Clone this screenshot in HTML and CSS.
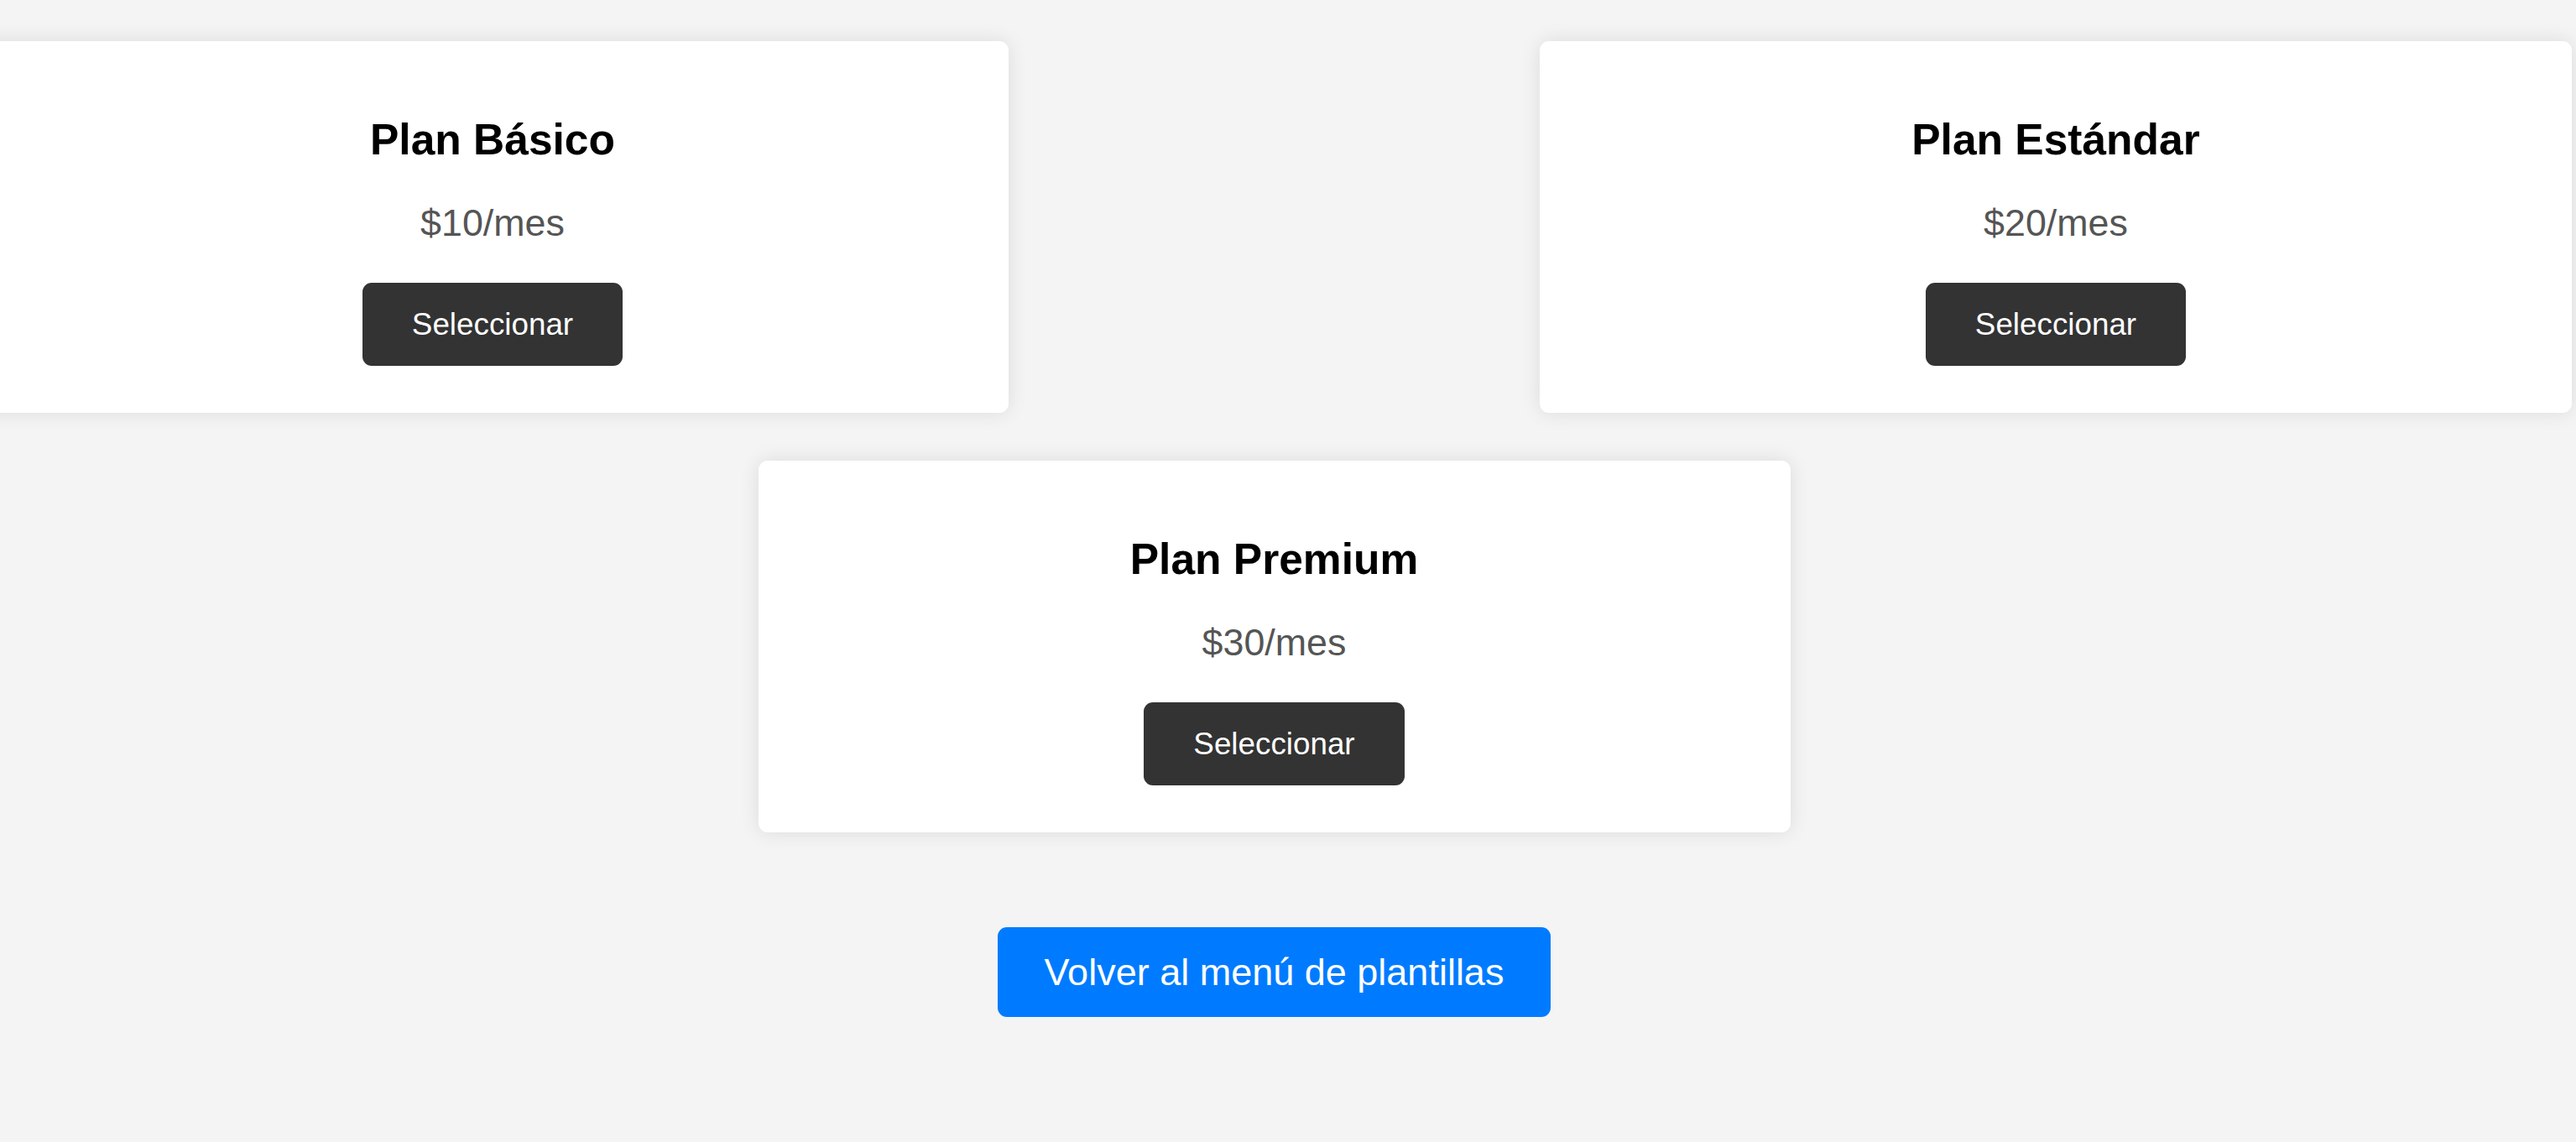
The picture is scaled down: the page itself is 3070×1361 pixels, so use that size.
FILE: index.html
```html
<!DOCTYPE html>
<html lang="es">
<head>
<meta charset="utf-8">
<title>Planes</title>
<link rel="stylesheet" href="styles.css">
</head>
<body>
<div class="page">
  <div class="plans">
    <div class="row">
      <div class="card">
        <h2 class="card-title">Plan Básico</h2>
        <p class="card-price">$10/mes</p>
        <button class="select-btn">Seleccionar</button>
      </div>
      <div class="card">
        <h2 class="card-title">Plan Estándar</h2>
        <p class="card-price">$20/mes</p>
        <button class="select-btn">Seleccionar</button>
      </div>
    </div>
    <div class="row">
      <div class="card">
        <h2 class="card-title">Plan Premium</h2>
        <p class="card-price">$30/mes</p>
        <button class="select-btn">Seleccionar</button>
      </div>
    </div>
  </div>
  <div class="actions">
    <button class="back-btn">Volver al menú de plantillas</button>
  </div>
</div>
</body>
</html>
```
FILE: styles.css
```css
html, body {
  margin: 0;
  padding: 0;
  background: #f4f4f4;
  overflow: hidden;
}

body {
  font-family: "Liberation Sans", Arial, sans-serif;
  color: #000;
}

.page {
  width: 3037px;
  padding-top: 49px;
}

.plans {
  display: flex;
  flex-direction: column;
  gap: 57px;
}

.row {
  display: flex;
  justify-content: center;
  gap: 633px;
}

.card {
  box-sizing: border-box;
  flex: 0 0 1230px;
  width: 1230px;
  background: #fff;
  border-radius: 11px;
  box-shadow: 0 0 23px rgba(0, 0, 0, 0.1);
  padding: 45px;
  text-align: center;
}

.card-title {
  font-size: 51.5px;
  font-weight: bold;
  line-height: normal;
  margin: 41.5px 0 44.5px;
}

.card-price {
  font-size: 44.8px;
  line-height: normal;
  color: #555;
  margin: 0 0 46px;
}

.select-btn {
  display: block;
  width: fit-content;
  margin: 0 auto 11px;
  font-family: "Liberation Sans", Arial, sans-serif;
  font-size: 36.8px;
  line-height: 42px;
  padding: 28.5px 59px;
  background: #333;
  color: #fff;
  border: none;
  border-radius: 11px;
}

.actions {
  display: flex;
  justify-content: center;
  padding-top: 113px;
}

.back-btn {
  font-family: "Liberation Sans", Arial, sans-serif;
  font-size: 45px;
  line-height: 51px;
  padding: 28px 56px;
  background: #007bff;
  color: #fff;
  border: none;
  border-radius: 11px;
}
```
